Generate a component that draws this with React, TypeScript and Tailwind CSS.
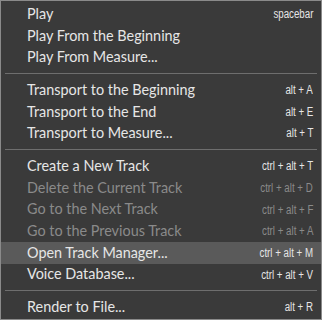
type Item = { label: string; keys?: string; disabled?: boolean; active?: boolean };

const groups: Item[][] = [
  [
    { label: "Play", keys: "spacebar" },
    { label: "Play From the Beginning" },
    { label: "Play From Measure..." },
  ],
  [
    { label: "Transport to the Beginning", keys: "alt + A" },
    { label: "Transport to the End", keys: "alt + E" },
    { label: "Transport to Measure...", keys: "alt + T" },
  ],
  [
    { label: "Create a New Track", keys: "ctrl + alt + T" },
    { label: "Delete the Current Track", keys: "ctrl + alt + D", disabled: true },
    { label: "Go to the Next Track", keys: "ctrl + alt + F", disabled: true },
    { label: "Go to the Previous Track", keys: "ctrl + alt + A", disabled: true },
    { label: "Open Track Manager...", keys: "ctrl + alt + M", active: true },
    { label: "Voice Database...", keys: "ctrl + alt + V" },
  ],
  [{ label: "Render to File...", keys: "alt + R" }],
];

const MenuRow = ({ item }: { item: Item }) => (
  <div
    className={`flex h-[21.7px] items-center justify-between pl-[26px] pr-[8px] ${
      item.active ? "bg-[#5a5a5a]" : ""
    } ${item.disabled ? "text-[#8a8a8a]" : "text-[#e6e6e6]"}`}>
    <span className="text-[14.4px] leading-none">{item.label}</span>
    {item.keys && (
      <span className="inline-block origin-right scale-x-[0.81] text-[12px] leading-none font-['Liberation_Sans',sans-serif]">
        {item.keys}
      </span>
    )}
  </div>
);

export default function App() {
  return (
    <div className="w-[322px] h-[320px] bg-[#3a3a3a] border border-[#8a8a8a] font-['Lato',sans-serif] pt-[2.2px]">
      {groups.map((group, i) => (
        <div key={i}>
          {i > 0 && <div className="mx-[4px] mt-[4.5px] mb-[5.5px] h-px bg-[#6e6e6e]" />}
          {group.map((item) => (
            <MenuRow key={item.label} item={item} />
          ))}
        </div>
      ))}
    </div>
  );
}
